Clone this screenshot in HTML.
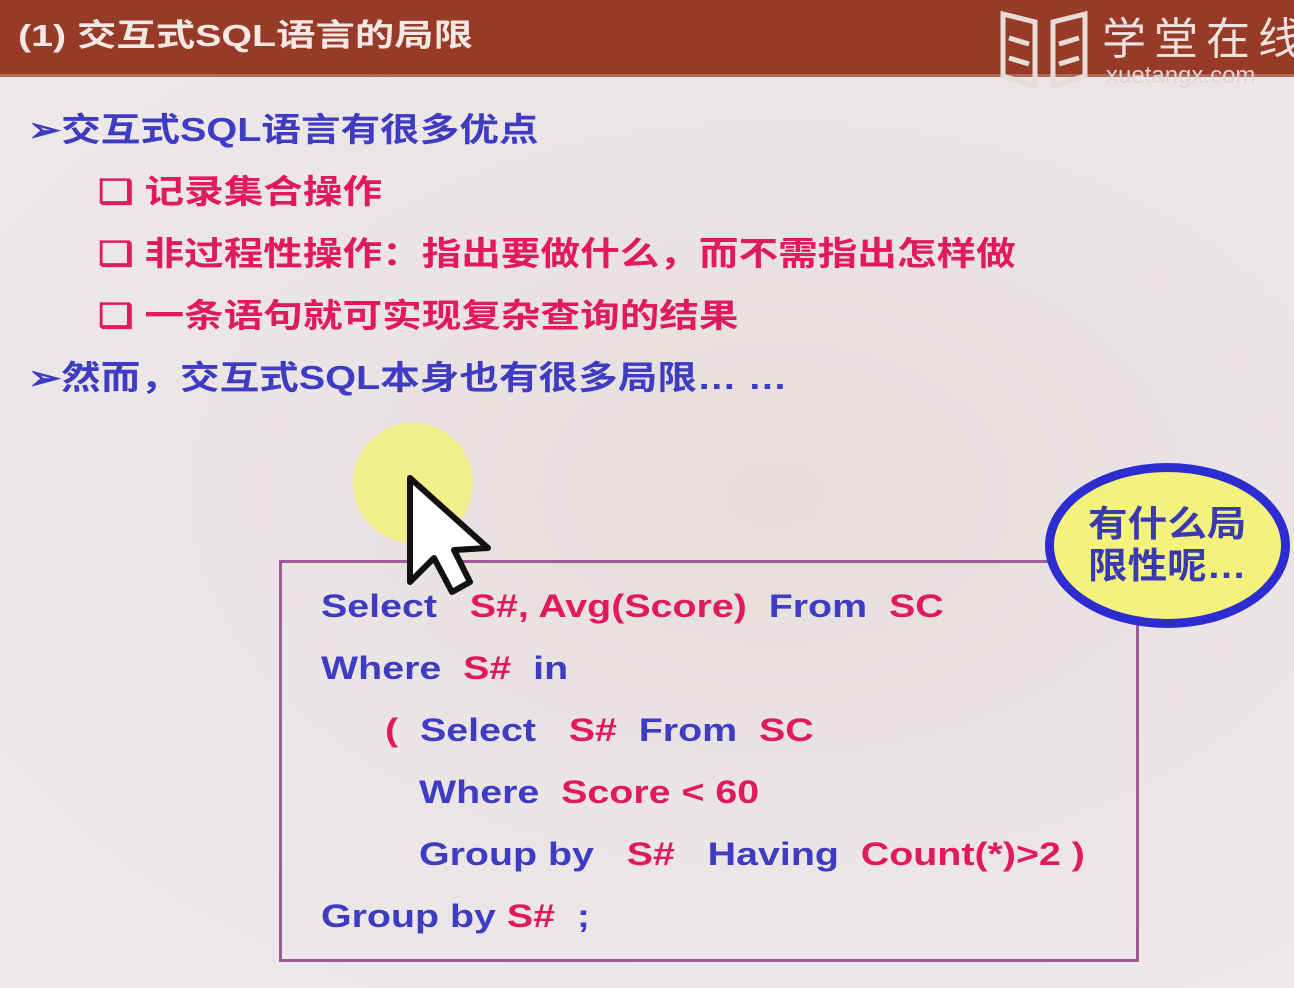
<!DOCTYPE html>
<html><head><meta charset="utf-8"><style>
body{margin:0;width:1294px;height:988px;overflow:hidden;background:#ebe3e3;position:relative;font-family:"Liberation Sans","Noto Sans CJK SC",sans-serif;font-weight:bold}
.bg{position:absolute;inset:0;background:radial-gradient(ellipse at 60% 50%,#e6dcdc 0%,#ece5e5 50%,#efe9e9 100%)}
.hdr{position:absolute;left:0;top:0;width:1294px;height:74px;background:#973b28;border-bottom:3px solid #b06a58}
.t{position:absolute;white-space:nowrap;line-height:1;transform-origin:0 50%}
.s{transform:scaleX(1.2)}
.c{transform:scaleX(1.23)}
.b{color:#3e3cc2}.r{color:#e01a5c}
.box{position:absolute;left:279px;top:560px;width:854px;height:396px;border:3px solid #9b5c98}
</style></head><body>
<div class="bg"></div>
<div class="hdr"></div>
<div class="t" style="left:18px;top:20px;font-size:31px;color:#f4e8e4;transform:scaleX(1.27)">(1) 交互式SQL语言的局限</div>
<svg style="position:absolute;left:995px;top:8px" width="100" height="86" viewBox="0 0 100 86" fill="none" stroke="#e8dcd8" stroke-width="5">
<path d="M8 6 L40 14 L40 78 L8 68 Z"/><path d="M90 6 L58 14 L58 78 L90 68 Z"/><path d="M14 30 L34 36 M64 36 L84 30 M14 50 L34 56 M64 56 L84 50"/></svg>
<div class="t" style="left:1102px;top:18px;font-size:44px;font-weight:normal;color:#eee2de;letter-spacing:8px">学堂在线</div>
<div class="t" style="left:1106px;top:64px;font-size:24px;font-weight:normal;color:#e0d6d4">xuetangx.com</div>

<div class="t b s" style="left:28px;top:113px;font-size:33px">➢交互式SQL语言有很多优点</div>
<div class="t r s" style="left:98px;top:175px;font-size:33px">❑ 记录集合操作</div>
<div class="t r s" style="left:98px;top:237px;font-size:33px">❑ 非过程性操作：指出要做什么，而不需指出怎样做</div>
<div class="t r s" style="left:98px;top:299px;font-size:33px">❑ 一条语句就可实现复杂查询的结果</div>
<div class="t b s" style="left:28px;top:361px;font-size:33px">➢然而，交互式SQL本身也有很多局限… …</div>

<div class="box"></div>
<div class="t c" style="left:321px;top:590px;font-size:32px"><span class="b">Select</span> &nbsp;&nbsp;<span class="r">S#, Avg(Score)</span>&nbsp; <span class="b">From</span>&nbsp; <span class="r">SC</span></div>
<div class="t c" style="left:321px;top:652px;font-size:32px"><span class="b">Where</span>&nbsp; <span class="r">S#</span>&nbsp; <span class="b">in</span></div>
<div class="t c" style="left:385px;top:714px;font-size:32px"><span class="r">(</span>&nbsp; <span class="b">Select</span>&nbsp;&nbsp; <span class="r">S#</span>&nbsp; <span class="b">From</span>&nbsp; <span class="r">SC</span></div>
<div class="t c" style="left:419px;top:776px;font-size:32px"><span class="b">Where</span>&nbsp; <span class="r">Score &lt; 60</span></div>
<div class="t c" style="left:419px;top:838px;font-size:32px"><span class="b">Group by</span>&nbsp;&nbsp; <span class="r">S#</span>&nbsp;&nbsp; <span class="b">Having</span>&nbsp; <span class="r">Count(*)&gt;2 )</span></div>
<div class="t c" style="left:321px;top:900px;font-size:32px"><span class="b">Group by</span> <span class="r">S#</span>&nbsp; <span class="b">;</span></div>

<div style="position:absolute;left:1045px;top:463px;width:227px;height:147px;border-radius:50%;border:9px solid #2c2cd0;background:#f2f27c"></div>
<div class="t" style="left:1088px;top:503px;font-size:36px;color:#3a3ab0;line-height:42px;transform:scaleX(1.1)">有什么局<br>限性呢…</div>

<div style="position:absolute;left:353px;top:423px;width:120px;height:120px;border-radius:50%;background:#f2f08a"></div>
<svg style="position:absolute;left:400px;top:470px" width="100" height="130" viewBox="0 0 100 130">
<path d="M10 8 L10 112 L34 88 L52 122 L70 112 L54 80 L88 78 Z" fill="#fff" stroke="#111" stroke-width="6" stroke-linejoin="round"/></svg>
</body></html>
